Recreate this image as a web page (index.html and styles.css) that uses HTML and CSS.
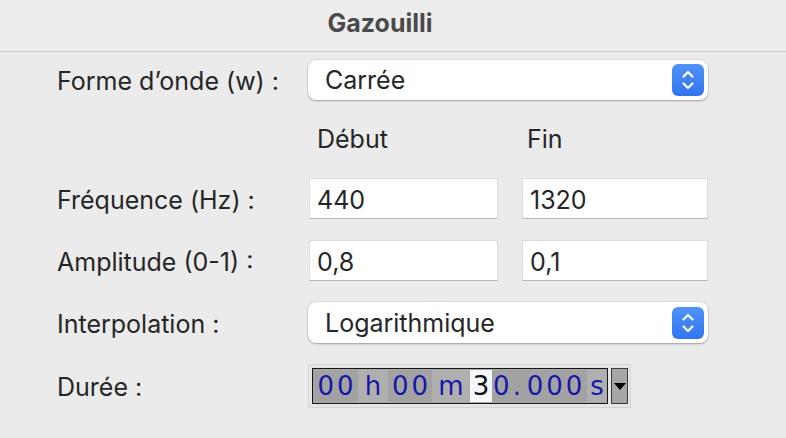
FILE: index.html
```html
<!DOCTYPE html>
<html lang="fr">
<head>
  <meta charset="UTF-8" />
  <meta name="viewport" content="width=device-width, initial-scale=1.0" />
  <title>Gazouilli</title>
  <link rel="stylesheet" href="styles.css">
</head>
<body>
  <header class="title-bar">Gazouilli</header>
  <main class="form">
    <div class="label">Forme d’onde (w) :</div>
    <div class="select wide">
      <span>Carrée</span>
      <span class="stepper">
        <svg width="32" height="32" viewBox="0 0 32 32">
          <path d="M11.5 12.5 L16 8 L20.5 12.5 M11.5 19.5 L16 24 L20.5 19.5" fill="none" stroke="#fff" stroke-width="2.2" stroke-linecap="round" stroke-linejoin="round"/>
        </svg>
      </span>
    </div>

    <div></div>
    <div class="col-head">Début</div>
    <div class="col-head second">Fin</div>

    <div class="label">Fréquence (Hz) :</div>
    <div class="field">440</div>
    <div class="field">1320</div>

    <div class="label">Amplitude (0-1) :</div>
    <div class="field">0,8</div>
    <div class="field">0,1</div>

    <div class="label">Interpolation :</div>
    <div class="select wide">
      <span>Logarithmique</span>
      <span class="stepper">
        <svg width="32" height="32" viewBox="0 0 32 32">
          <path d="M11.5 12.5 L16 8 L20.5 12.5 M11.5 19.5 L16 24 L20.5 19.5" fill="none" stroke="#fff" stroke-width="2.2" stroke-linecap="round" stroke-linejoin="round"/>
        </svg>
      </span>
    </div>

    <div class="label">Durée :</div>
    <div class="duration wide">
      <div class="clock">
        <span class="seg num w45">00</span>
        <span class="seg unit w30">h</span>
        <span class="seg num w44">00</span>
        <span class="seg unit w38">m</span>
        <span class="seg cur w22">3</span>
        <span class="seg num w30">0.</span>
        <span class="seg num w65">000</span>
        <span class="seg unit w20">s</span>
      </div>
      <div class="clock-btn"><span class="arrow"></span></div>
    </div>
  </main>
</body>
</html>
```

FILE: styles.css
```css
body {
  margin: 0;
  background: #ebebeb;
  color: #262626;
  font-family: Inter, "Noto Sans", sans-serif;
  font-size: 25px;
}
.title-bar {
  height: 51px;
  line-height: 46px;
  border-bottom: 1px solid #c8c8c8;
  background: #ededed;
  color: #4a4a4a;
  font-size: 25px;
  font-weight: 700;
  text-align: center;
  padding-right: 26px;
}
.form {
  display: grid;
  grid-template-columns: 228px 189px 186px;
  grid-template-rows: 40px 36px 41px 41px 41px 44px;
  column-gap: 24px;
  row-gap: 21px;
  padding: 8px 0 0 57px;
}
.label {
  align-self: center;
  padding-top: 2px;
  white-space: nowrap;
}
.wide {
  grid-column: 2 / 4;
}
.select {
  display: flex;
  align-items: center;
  justify-content: space-between;
  margin-left: -1px;
  padding: 0 4px 0 17px;
  background: #fff;
  border-radius: 8px;
  box-shadow: 0 0 0 0.5px rgba(0,0,0,0.12), 0 1px 2px rgba(0,0,0,0.28);
}
.stepper {
  display: flex;
  width: 32px;
  height: 32px;
  border-radius: 6px;
  background: linear-gradient(#4f93f8, #3274ef);
}
.col-head {
  align-self: center;
  padding-left: 8px;
}
.col-head.second {
  padding-left: 5px;
}
.field {
  display: flex;
  align-items: center;
  padding: 3px 0 0 7px;
  background: #fff;
  border: 1px solid #dcdcdc;
  border-bottom-color: #b8b8b8;
}
.duration {
  display: flex;
  align-items: center;
  width: 323px;
  margin-left: -1px;
  padding: 0 2px 0 3px;
  background: #e6e6e6;
  border: 1px solid #d4d4d4;
  box-sizing: border-box;
}
.clock {
  display: flex;
  height: 36px;
  padding: 1px 0;
  box-sizing: border-box;
  background: #a9a9a9;
  border: 1.5px solid #151515;
}
.seg {
  display: flex;
  flex: none;
  min-width: 0;
  align-items: center;
  justify-content: center;
  padding-left: 3px;
  box-sizing: border-box;
  font-family: "DejaVu Sans", sans-serif;
  font-size: 26px;
  letter-spacing: 3px;
  color: #1616aa;
}
.num { background: #a2a2a2; }
.unit { background: #afafaf; }
.cur { background: #f6f6ff; color: #111; }
.w20 { width: 20px; }
.w22 { width: 22px; }
.w30 { width: 30px; }
.w38 { width: 38px; }
.w44 { width: 44px; }
.w45 { width: 45px; }
.w65 { width: 65px; }
.clock-btn {
  display: flex;
  flex: none;
  justify-content: center;
  align-items: center;
  width: 17px;
  height: 36px;
  margin-left: 3px;
  box-sizing: border-box;
  background: #a6a6a6;
  border: 1px solid #3a3a3a;
}
.arrow {
  width: 0;
  height: 0;
  border-left: 6px solid transparent;
  border-right: 6px solid transparent;
  border-top: 7px solid #000;
}
```
